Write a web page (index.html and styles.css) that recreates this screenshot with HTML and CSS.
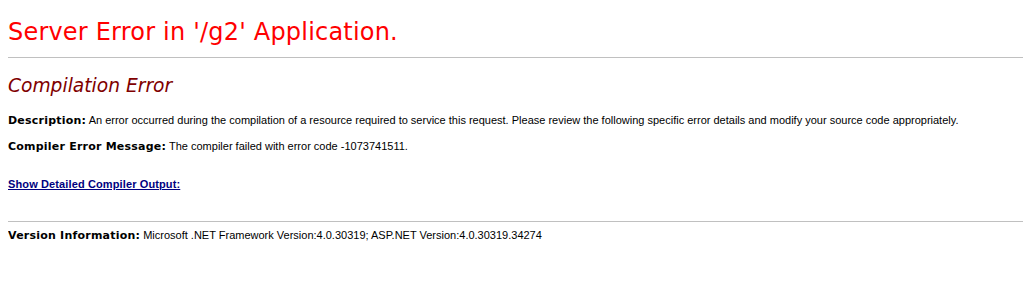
FILE: index.html
```html
<!DOCTYPE html>
<html>
<head>
<meta charset="utf-8">
<title>Compilation Error</title>
<link rel="stylesheet" href="styles.css">
</head>
<body class="page">
<h1 class="title">Server Error in '/g2' Application.</h1>
<hr class="rule rule-top">
<h2 class="subtitle"><i>Compilation Error</i></h2>
<div class="details">
<p class="line"><b class="label">Description:</b> An error occurred during the compilation of a resource required to service this request. Please review the following specific error details and modify your source code appropriately.</p>
<p class="line msg"><b class="label">Compiler Error Message:</b> The compiler failed with error code -1073741511.</p>
<div class="line expandable">Show Detailed Compiler Output:</div>
<hr class="rule rule-bottom">
<p class="line version"><b class="label">Version Information:</b>&nbsp;Microsoft .NET Framework Version:4.0.30319; ASP.NET Version:4.0.30319.34274</p>
</div>
</body>
</html>
```
FILE: styles.css
```css
html { background: #fff; }
.page {
  margin: 0 0 8px 8px;
  padding-top: 18px;
  font-family: "DejaVu Sans", Verdana, sans-serif;
  font-weight: normal;
  font-size: 11px;
  color: black;
  background: #fff;
}
.title {
  font-family: "DejaVu Sans", Verdana, sans-serif;
  font-weight: normal;
  font-size: 24px;
  letter-spacing: 0.2px;
  color: red;
  margin: 0;
}
.rule {
  border: 0;
  height: 1px;
  background: #c0c0c0;
  width: 100%;
}
.rule-top {
  margin: 11px 0 0;
}
.subtitle {
  font-family: "DejaVu Sans", Verdana, sans-serif;
  font-weight: normal;
  font-size: 18.67px;
  color: maroon;
  margin: 17px 0 17px;
}
.details {
  font-family: "Liberation Sans", Arial, sans-serif;
  font-size: 11px;
}
.line {
  margin: 0;
  line-height: 14px;
}
.msg {
  margin-top: 11px;
}
.label {
  font-family: "DejaVu Sans", Verdana, sans-serif;
  font-weight: bold;
  letter-spacing: 0.22px;
  color: black;
}
.expandable {
  margin-top: 23px;
  text-decoration: underline;
  font-weight: bold;
  letter-spacing: 0.12px;
  color: navy;
  cursor: pointer;
}
.rule-bottom {
  margin: 30px 0 0;
}
.version {
  margin-top: 6px;
}
```
